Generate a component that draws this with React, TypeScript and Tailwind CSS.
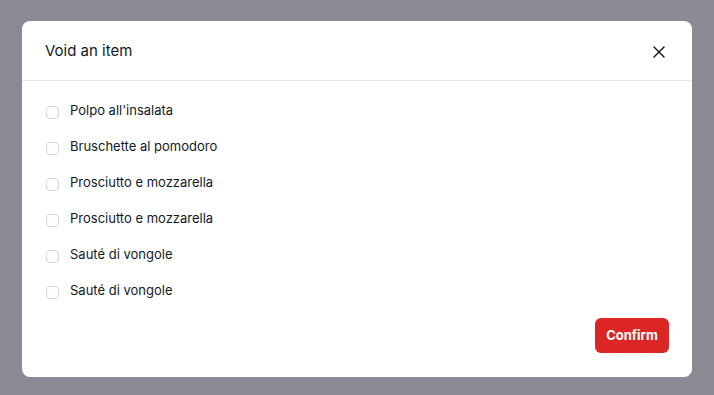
import React from "react";

const items = [
  "Polpo all'insalata",
  "Bruschette al pomodoro",
  "Prosciutto e mozzarella",
  "Prosciutto e mozzarella",
  "Sauté di vongole",
  "Sauté di vongole",
];

export default function App() {
  return (
    <div
      className="w-[714px] h-[395px] bg-[#898a94] flex justify-center pt-[21px]"
      style={{ fontFamily: "Inter, 'Noto Sans', sans-serif" }}
    >
      <div className="w-[670px] h-[356px] bg-white rounded-lg flex flex-col">
        <div className="h-[60px] pl-[23px] pr-[27px] flex items-center justify-between border-b border-[#e5e7eb]">
          <h2 className="text-[15px] font-normal text-[#111827] mt-[1px]">Void an item</h2>
          <svg width="12" height="12" viewBox="0 0 12 12" className="mt-[3px]">
            <path d="M1 1L11 11M11 1L1 11" stroke="#111" strokeWidth="1.4" strokeLinecap="round" />
          </svg>
        </div>
        <div className="pl-6 pr-6 pt-3 flex flex-col">
          {items.map((t, i) => (
            <label key={i} className="h-9 flex items-center gap-[11px]">
              <span className="w-[13px] h-[13px] mt-[2px] rounded-[4px] border border-[#d1d5db] bg-white" />
              <span className="text-[13px] text-[#111827]">{t}</span>
            </label>
          ))}
        </div>
        <div className="flex justify-end pr-[23px] mt-[9px]">
          <button className="w-[74px] h-[35px] rounded-md bg-[#dc2626] text-white text-[13px] font-bold">
            Confirm
          </button>
        </div>
      </div>
    </div>
  );
}
